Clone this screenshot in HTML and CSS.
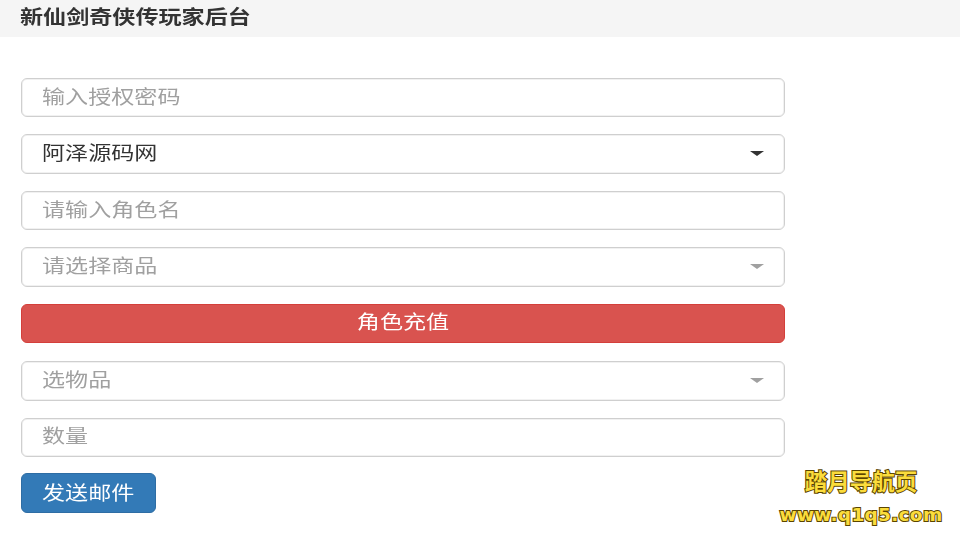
FILE: index.html
```html
<!DOCTYPE html>
<html lang="zh-CN">
<head>
    <meta charset="UTF-8">
    <title>新仙剑奇侠传玩家后台</title>
    <link rel="stylesheet" href="styles.css">
</head>
<body>
    <div class="header"><span class="wide">新仙剑奇侠传玩家后台</span></div>

    <form class="panel">
        <div class="field muted"><span class="wide">输入授权密码</span></div>
        <div class="field select"><span class="wide">阿泽源码网</span><i class="caret"></i></div>
        <div class="field muted"><span class="wide">请输入角色名</span></div>
        <div class="field select muted"><span class="wide">请选择商品</span><i class="caret"></i></div>
        <div class="btn btn-red"><span class="wide">角色充值</span></div>
        <div class="field select muted"><span class="wide">选物品</span><i class="caret"></i></div>
        <div class="field muted"><span class="wide">数量</span></div>
        <div class="btn btn-blue"><span class="wide">发送邮件</span></div>
    </form>

    <div class="mark">
        <div class="mark-cn">踏月导航页</div>
        <div class="mark-url">www.q1q5.com</div>
    </div>
</body>
</html>
```

FILE: styles.css
```css
*{
    box-sizing: border-box;
}
body{
    margin: 0;
    background: #fff;
    color: #333;
    font-family: "Liberation Sans", "Noto Sans CJK SC", sans-serif;
    font-size: 19px;
}
/* 截图被横向拉伸过，文字单独拉宽 */
.wide{
    display: inline-block;
    transform: scaleX(1.215);
    transform-origin: left center;
    white-space: nowrap;
    filter: blur(0.3px);
}
.header{
    height: 37px;
    padding-left: 20px;
    background: #f5f5f5;
    line-height: 36px;
    font-weight: bold;
    color: #333;
}
.panel{
    display: flex;
    flex-direction: column;
    gap: 17px;
    width: 764px;
    margin: 41px 0 0 21px;
}
.field{
    display: flex;
    align-items: center;
    justify-content: space-between;
    height: 39.45px;
    padding: 0 20px 5px;
    border: 1px solid #cfcfcf;
    border-radius: 6px;
    background: #fff;
    box-shadow: inset 0 0 0 1px #f1f1f1;
}
.muted{
    color: #a0a0a0;
}
.caret{
    width: 0;
    height: 0;
    margin-top: 4px;
    border-top: 5px solid currentColor;
    border-left: 7px solid transparent;
    border-right: 7px solid transparent;
}
.btn{
    display: flex;
    align-items: center;
    height: 39.45px;
    padding-bottom: 5px;
    border-radius: 6px;
    color: #fff;
}
.btn-red{
    justify-content: center;
    margin-bottom: 1px;
    background: #d9534f;
    border: 1px solid #d43f3a;
}
.btn-red .wide{
    transform-origin: center;
}
.btn-blue{
    width: 135px;
    height: 40px;
    margin-top: -1px;
    padding-bottom: 4px;
    padding-left: 20px;
    background: #337ab7;
    border: 1px solid #2e6da4;
}
.mark{
    position: absolute;
    left: 770px;
    top: 468px;
    width: 182px;
    text-align: center;
    font-weight: bold;
    color: #fbdc3c;
    -webkit-text-stroke: 2px #5a4500;
    paint-order: stroke fill;
}
.mark-cn{
    font-size: 22.5px;
    line-height: 30px;
}
.mark-url{
    margin-top: 6px;
    font-family: "DejaVu Sans", sans-serif;
    font-size: 18.5px;
    line-height: 22px;
    letter-spacing: 0.3px;
}
```
